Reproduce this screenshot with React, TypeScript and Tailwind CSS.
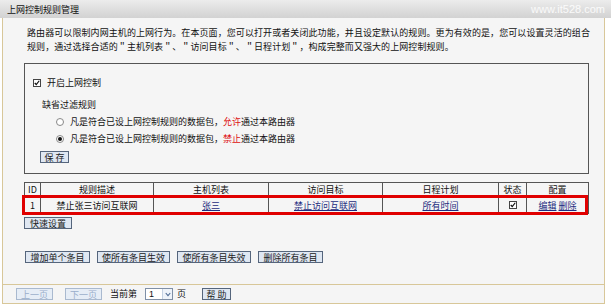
import type { ReactNode } from "react";

const cjk = "font-['Noto_Sans_CJK_SC','Liberation_Sans',sans-serif]";

function Btn({ children, className = "", disabled = false }: { children: ReactNode; className?: string; disabled?: boolean }) {
  return (
    <button
      type="button"
      className={
        "flex h-[12px] items-center justify-center border text-[9px] leading-none " +
        (disabled
          ? "border-[#a9b9cf] bg-[#e6edf6] text-[#9aaecb] "
          : "border-[#55657c] bg-[#dfe7f2] text-[#222] ") +
        className
      }
    >
      {children}
    </button>
  );
}

function CheckBox() {
  return (
    <span className="flex h-[8px] w-[8px] items-center justify-center border border-[#444] bg-white">
      <svg viewBox="0 0 8 8" className="h-[6px] w-[6px]">
        <path d="M1 4 L3 6 L7 1" fill="none" stroke="#111" strokeWidth="1.6" />
      </svg>
    </span>
  );
}

function Radio({ checked = false }: { checked?: boolean }) {
  return (
    <span className="flex h-[8px] w-[8px] items-center justify-center rounded-full border border-[#888] bg-white">
      {checked && <span className="h-[4px] w-[4px] rounded-full bg-[#111]" />}
    </span>
  );
}

const cols = [
  { label: "ID", w: "w-[16px]" },
  { label: "规则描述", w: "w-[113px]" },
  { label: "主机列表", w: "w-[115px]" },
  { label: "访问目标", w: "w-[114px]" },
  { label: "日程计划", w: "w-[116px]" },
  { label: "状态", w: "w-[28px]" },
  { label: "配置", w: "w-[62px]" },
];

export default function App() {
  return (
    <div className={"h-[308px] w-[611px] overflow-hidden bg-white text-[#111] " + cjk}>
      <div className="flex h-[18px] items-center justify-between bg-gradient-to-b from-[#ececec] to-[#d2d2d2] pl-[7px] pr-[6px]">
        <span className="text-[9px] leading-none text-[#111]">上网控制规则管理</span>
        <span className="font-['Liberation_Sans',sans-serif] text-[11px] leading-none text-white/85">www.it528.com</span>
      </div>

      <div className="ml-[2px] h-[267px] w-[603px] border-x border-b border-[#d8c799] bg-[#f5f5f5] pt-[8px]">
        <p className="pl-[24px] pr-[10px] text-[9px] leading-[14px] tracking-[0.08px]">
          路由器可以限制内网主机的上网行为。在本页面，您可以打开或者关闭此功能，并且设定默认的规则。更为有效的是，您可以设置灵活的组合
          规则，通过选择合适的＂主机列表＂、＂访问目标＂、＂日程计划＂，构成完整而又强大的上网控制规则。
        </p>

        <div className="ml-[21px] mt-[9px] h-[111px] w-[565px] border border-[#555] pt-[12px] text-[9px]">
          <div className="flex h-[14px] items-center pl-[8px]">
            <CheckBox />
            <span className="ml-[6px]">开启上网控制</span>
          </div>
          <div className="mt-[8px] flex h-[14px] items-center pl-[17px]">缺省过滤规则</div>
          <div className="mt-[3px] flex h-[14px] items-center pl-[31px]">
            <Radio />
            <span className="ml-[6px]">
              凡是符合已设上网控制规则的数据包，<span className="text-[#d11]">允许</span>通过本路由器
            </span>
          </div>
          <div className="mt-[3px] flex h-[14px] items-center pl-[31px]">
            <Radio checked />
            <span className="ml-[6px]">
              凡是符合已设上网控制规则的数据包，<span className="text-[#d11]">禁止</span>通过本路由器
            </span>
          </div>
          <div className="mt-[5px] pl-[15px]">
            <Btn className="w-[29px]">保 存</Btn>
          </div>
        </div>

        <div className="relative ml-[21px] mt-[8px] w-[565px]">
          <table className="w-[565px] table-fixed border-collapse border border-[#555] text-[9px]">
            <colgroup>
              {cols.map((c) => (
                <col key={c.label} className={c.w} />
              ))}
            </colgroup>
            <thead>
              <tr className="h-[14px]">
                {cols.map((c) => (
                  <th key={c.label} className="border border-[#555] p-0 text-center font-normal leading-none">
                    {c.label}
                  </th>
                ))}
              </tr>
            </thead>
            <tbody>
              <tr className="h-[17px] text-center leading-none">
                <td className="border border-[#555] p-0">1</td>
                <td className="border border-[#555] p-0">禁止张三访问互联网</td>
                <td className="border border-[#555] p-0 text-[#1f2d80] underline">张三</td>
                <td className="border border-[#555] p-0 text-[#1f2d80] underline">禁止访问互联网</td>
                <td className="border border-[#555] p-0 text-[#1f2d80] underline">所有时间</td>
                <td className="border border-[#555] p-0">
                  <span className="flex justify-center">
                    <CheckBox />
                  </span>
                </td>
                <td className="border border-[#555] p-0 text-[#1f2d80]">
                  <span className="underline">编辑</span> <span className="underline">删除</span>
                </td>
              </tr>
            </tbody>
          </table>
          <div className="pointer-events-none absolute left-[-2px] top-[13px] h-[20px] w-[566px] border-[3px] border-[#e00000]" />
        </div>

        <div className="ml-[21px] mt-[3px]">
          <Btn className="w-[48px]">快速设置</Btn>
        </div>

        <div className="ml-[22px] mt-[22px] flex gap-[7px]">
          <Btn className="w-[65px]">增加单个条目</Btn>
          <Btn className="w-[73px]">使所有条目生效</Btn>
          <Btn className="w-[74px]">使所有条目失效</Btn>
          <Btn className="w-[65px]">删除所有条目</Btn>
        </div>
      </div>

      <div className="ml-[2px] flex h-[19px] w-[603px] items-center border-x border-b border-[#d8c799] bg-[#f5f5f5] pl-[13px] text-[9px]">
        <Btn disabled className="w-[37px]">上一页</Btn>
        <Btn disabled className="ml-[12px] w-[37px]">下一页</Btn>
        <span className="ml-[8px]">当前第</span>
        <span className="ml-[8px] flex h-[12px] w-[28px] items-center border border-[#7f8fa6] bg-white">
          <span className="flex-1 pl-[3px] font-['Liberation_Sans',sans-serif] text-[9px] leading-none">1</span>
          <span className="flex h-full w-[10px] items-center justify-center border-l border-[#c5d2e4] bg-[#eef3fa]">
            <svg viewBox="0 0 8 6" className="h-[5px] w-[6px]">
              <path d="M1 1 L4 4.5 L7 1" fill="none" stroke="#4d6a94" strokeWidth="1.4" />
            </svg>
          </span>
        </span>
        <span className="ml-[4px]">页</span>
        <Btn className="ml-[16px] w-[29px]">帮 助</Btn>
      </div>
    </div>
  );
}
